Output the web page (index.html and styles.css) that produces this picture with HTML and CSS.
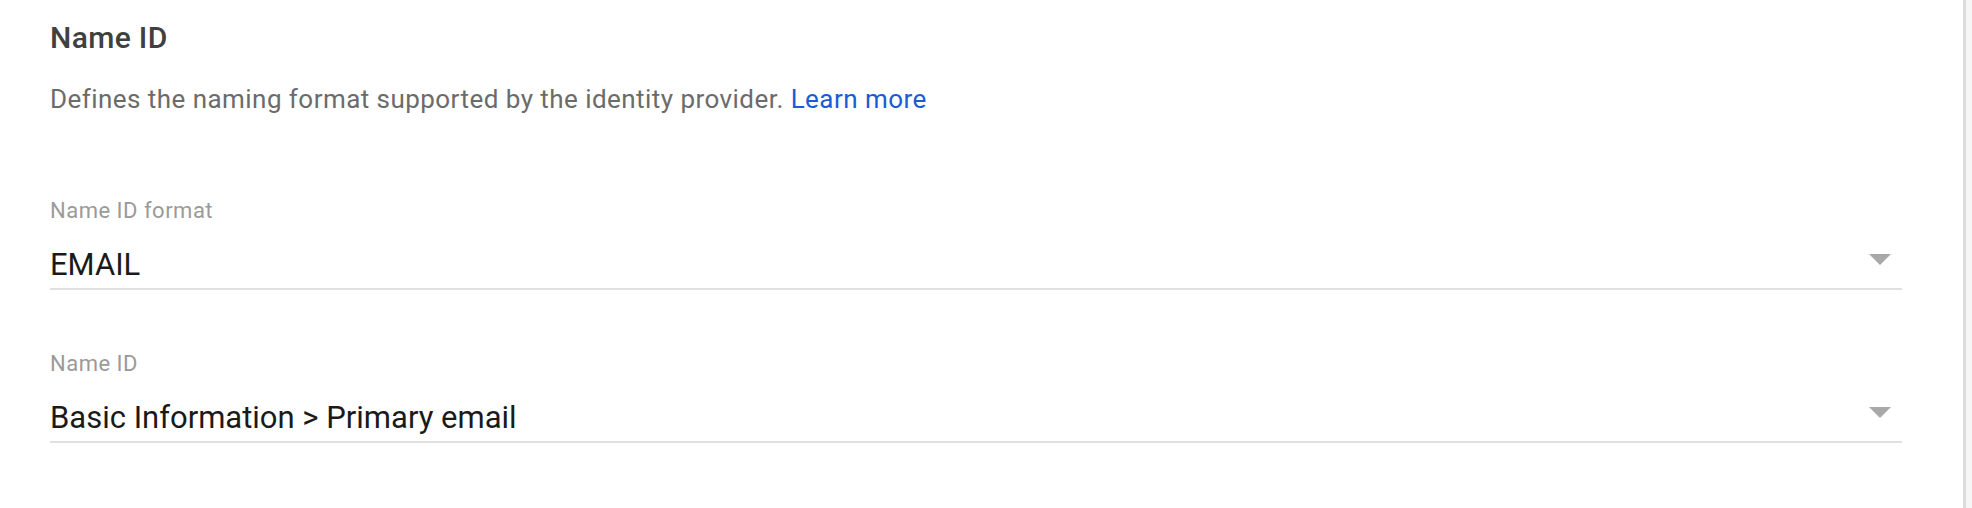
FILE: index.html
```html
<!DOCTYPE html>
<html>
<head>
<meta charset="utf-8">
<link rel="stylesheet" href="styles.css">
</head>
<body>
<div class="page">
  <section class="card">
    <h2 class="title">Name ID</h2>
    <p class="desc">Defines the naming format supported by the identity provider. <a class="link" href="#">Learn more</a></p>
    <div class="field first">
      <div class="label">Name ID format</div>
      <div class="select">
        <span class="value">EMAIL</span>
        <svg class="caret" width="22" height="11" viewBox="0 0 22 11"><polygon points="0,0 22,0 11,11" fill="#a8a8a8"/></svg>
      </div>
    </div>
    <div class="field">
      <div class="label">Name ID</div>
      <div class="select">
        <span class="value">Basic Information &gt; Primary email</span>
        <svg class="caret" width="22" height="11" viewBox="0 0 22 11"><polygon points="0,0 22,0 11,11" fill="#a8a8a8"/></svg>
      </div>
    </div>
  </section>
  <div class="edge"></div>
</div>
</body>
</html>
```
FILE: styles.css
```css
html, body {
  margin: 0;
  padding: 0;
  background: #ffffff;
}
.page {
  display: flex;
  height: 508px;
  font-family: Roboto, "Liberation Sans", sans-serif;
}
.card {
  width: 1852px;
  padding: 20px 61px 0 50px;
  background: #ffffff;
  border-right: 3px solid #dcdcdc;
}
.edge {
  flex: 1;
  background: #f6f6f6;
}
.title {
  margin: 0;
  font-size: 30px;
  line-height: 36px;
  font-weight: 500;
  letter-spacing: 0.35px;
  color: #404040;
}
.desc {
  margin: 27px 0 0;
  font-size: 26px;
  line-height: 32px;
  letter-spacing: 0.45px;
  color: #6b6b6b;
}
.link {
  color: #1a5bd6;
  text-decoration: none;
}
.field {
  margin-top: 62px;
}
.field.first {
  margin-top: 84px;
}
.label {
  font-size: 22px;
  line-height: 24px;
  letter-spacing: 0.5px;
  color: #9a9a9a;
}
.select {
  display: flex;
  justify-content: space-between;
  align-items: flex-start;
  margin-top: 22px;
  padding: 0 11px 3px 0;
  border-bottom: 2px solid #e0e0e0;
}
.value {
  font-size: 31px;
  line-height: 40px;
  color: #1a1a1a;
}
.caret {
  display: block;
  margin-top: 9px;
}
```
